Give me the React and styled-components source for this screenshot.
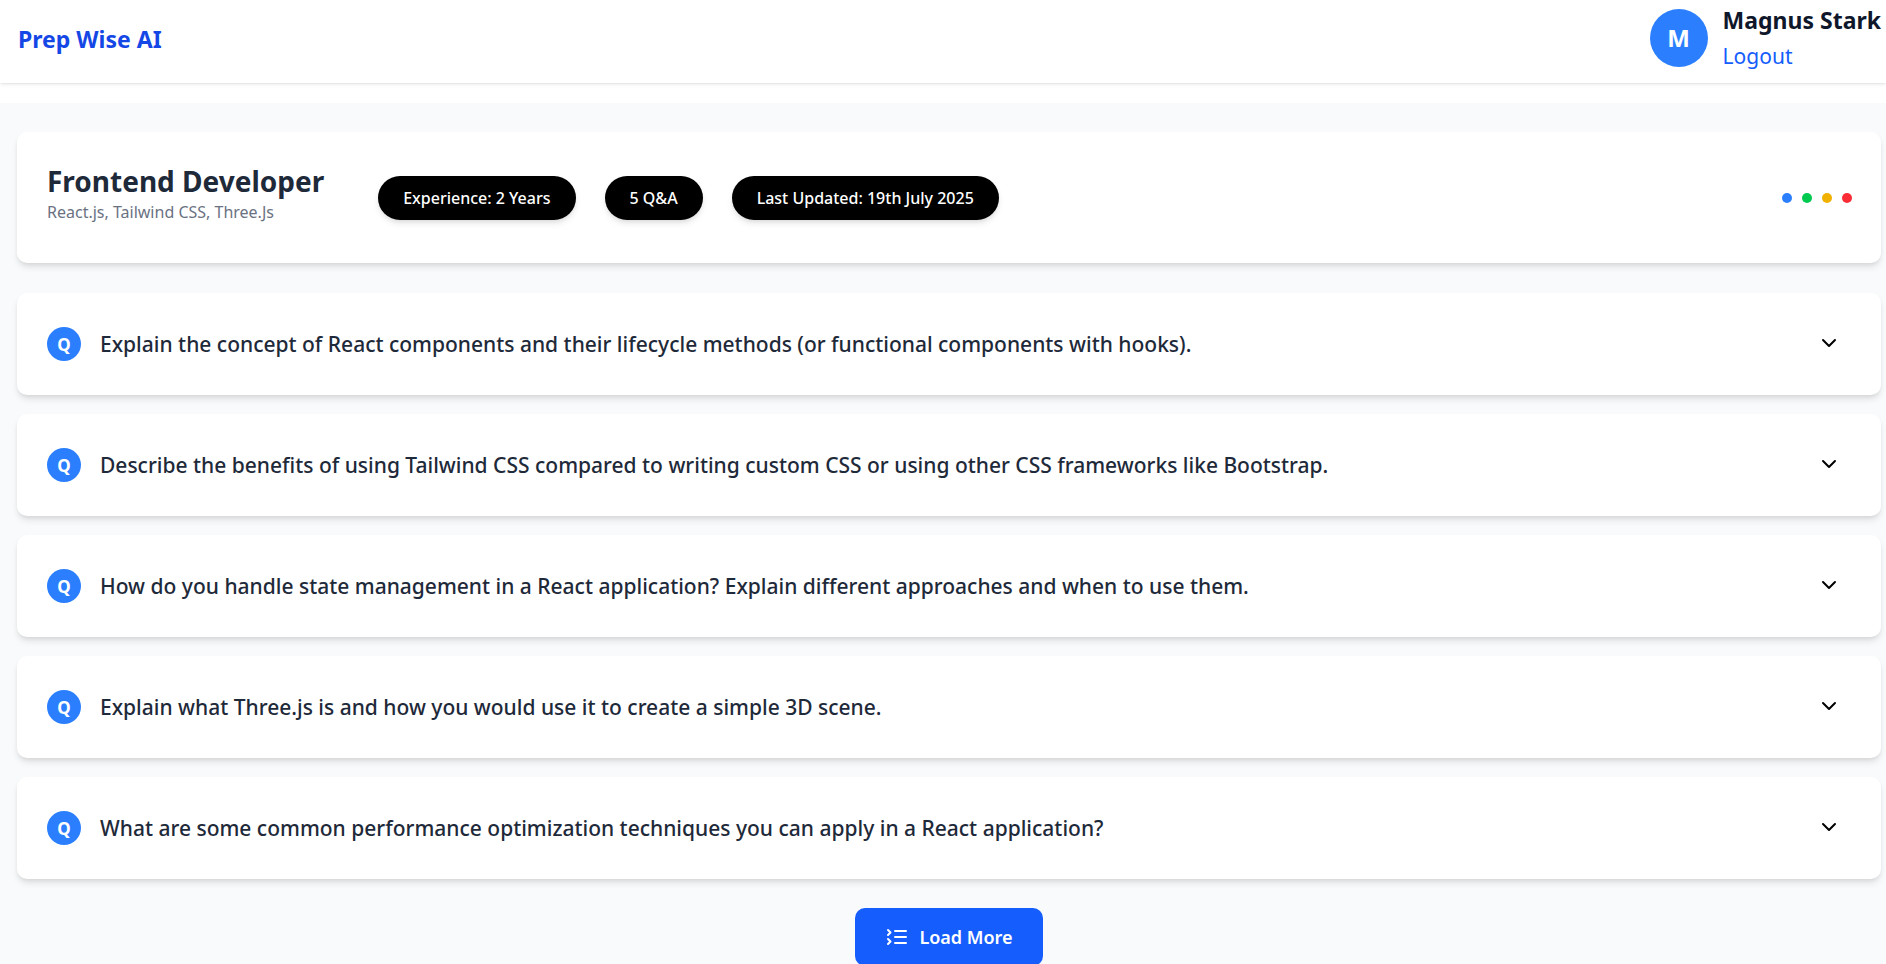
import React from "react";
import styled, { createGlobalStyle } from "styled-components";

const GlobalStyle = createGlobalStyle`
  *, *::before, *::after { box-sizing: border-box; }
  body {
    margin: 0;
    background: #ffffff;
    font-family: "Noto Sans", "Open Sans", sans-serif;
    overflow-x: hidden;
  }
  ::-webkit-scrollbar { display: none; }
  button { font-family: inherit; cursor: pointer; border: 0; }
`;

const cardShadow = "0 5px 7px -1px rgba(0,0,0,0.1), 0 2px 5px -2px rgba(0,0,0,0.1)";

const Header = styled.header`
  display: flex;
  align-items: center;
  justify-content: space-between;
  height: 83px;
  padding: 0 5px 7px 18px;
  background: #ffffff;
  box-shadow: 0 1px 4px rgba(0, 0, 0, 0.1), 0 1px 2px -1px rgba(0, 0, 0, 0.1);
`;

const Brand = styled.a`
  padding-top: 2px;
  color: #1447e6;
  font-size: 23px;
  font-weight: 700;
  line-height: 32px;
  text-decoration: none;
`;

const User = styled.div`
  display: flex;
  align-items: center;
  gap: 15px;
`;

const Avatar = styled.span`
  display: flex;
  align-items: center;
  justify-content: center;
  flex: none;
  width: ${(p) => p.$size}px;
  height: ${(p) => p.$size}px;
  border-radius: 50%;
  background: #2b7fff;
  color: #ffffff;
  font-size: ${(p) => p.$font}px;
  font-weight: 700;
  line-height: 1;
`;

const UserText = styled.div`
  display: flex;
  flex-direction: column;
  align-items: flex-start;
`;

const UserName = styled.span`
  color: #0f172b;
  font-size: 23px;
  font-weight: 700;
  line-height: 36px;
`;

const Logout = styled.button`
  padding: 0;
  background: none;
  color: #155dfc;
  font-size: 21px;
  line-height: 36px;
`;

const Main = styled.main`
  display: flex;
  flex-direction: column;
  margin-top: 20px;
  padding: 29px 5px 29px 17px;
  background: #f9fafb;
`;

const Summary = styled.section`
  display: flex;
  align-items: center;
  justify-content: space-between;
  height: 131px;
  padding: 0 29px 0 30px;
  border-radius: 10px;
  background: #ffffff;
  box-shadow: ${cardShadow};
`;

const SummaryInfo = styled.div`
  display: flex;
  align-items: center;
  gap: 54px;
`;

const Role = styled.div`
  padding-bottom: 8px;
`;

const Title = styled.h1`
  margin: 0;
  color: #1e2939;
  font-size: 28px;
  font-weight: 700;
  line-height: 36px;
`;

const Skills = styled.p`
  margin: 0;
  color: #6a7282;
  font-size: 16px;
  line-height: 26px;
`;

const Pills = styled.div`
  display: flex;
  gap: 29px;
`;

const Pill = styled.span`
  padding: 8px 25px;
  border-radius: 22px;
  background: #000000;
  color: #ffffff;
  font-size: 16px;
  font-weight: 500;
  line-height: 28px;
  box-shadow: 0 4px 7px -1px rgba(0, 0, 0, 0.1), 0 2px 5px -2px rgba(0, 0, 0, 0.1);
`;

const Dots = styled.div`
  display: flex;
  gap: 10px;
`;

const Dot = styled.span`
  width: 10px;
  height: 10px;
  border-radius: 50%;
  background: ${(p) => p.$color};
`;

const Questions = styled.div`
  display: flex;
  flex-direction: column;
  gap: 19px;
  margin-top: 30px;
`;

const QuestionCard = styled.article`
  display: flex;
  align-items: center;
  height: 102px;
  padding: 0 40px 0 30px;
  border-radius: 10px;
  background: #ffffff;
  box-shadow: ${cardShadow};
`;

const QuestionText = styled.h2`
  flex: 1;
  margin: 0 0 0 19px;
  color: #1e2939;
  font-size: 21px;
  font-weight: 500;
  line-height: 32px;
`;

const IconButton = styled.button`
  display: flex;
  padding: 0 0 2px;
  background: none;
  color: #000000;
`;

const LoadMore = styled.button`
  display: flex;
  align-items: center;
  justify-content: center;
  align-self: center;
  gap: 10px;
  width: 188px;
  height: 58px;
  margin-top: 29px;
  border-radius: 10px;
  background: #155dfc;
  color: #ffffff;
  font-size: 18px;
  font-weight: 600;
`;

const Stroke = ({ size, children }) => (
  <svg
    width={size}
    height={size}
    viewBox="0 0 24 24"
    fill="none"
    stroke="currentColor"
    strokeWidth="2"
    strokeLinecap="round"
    strokeLinejoin="round"
    aria-hidden="true"
  >
    {children}
  </svg>
);

const questions = [
  "Explain the concept of React components and their lifecycle methods (or functional components with hooks).",
  "Describe the benefits of using Tailwind CSS compared to writing custom CSS or using other CSS frameworks like Bootstrap.",
  "How do you handle state management in a React application? Explain different approaches and when to use them.",
  "Explain what Three.js is and how you would use it to create a simple 3D scene.",
  "What are some common performance optimization techniques you can apply in a React application?",
];

export default function App() {
  return (
    <>
      <GlobalStyle />
      <Header>
        <Brand href="#">Prep Wise AI</Brand>
        <User>
          <Avatar $size={58} $font={24}>M</Avatar>
          <UserText>
            <UserName>Magnus Stark</UserName>
            <Logout type="button">Logout</Logout>
          </UserText>
        </User>
      </Header>
      <Main>
        <Summary>
          <SummaryInfo>
            <Role>
              <Title>Frontend Developer</Title>
              <Skills>React.js, Tailwind CSS, Three.Js</Skills>
            </Role>
            <Pills>
              <Pill>Experience: 2 Years</Pill>
              <Pill>5 Q&amp;A</Pill>
              <Pill>Last Updated: 19th July 2025</Pill>
            </Pills>
          </SummaryInfo>
          <Dots>
            {["#2b7fff", "#00c950", "#f0b100", "#fb2c36"].map((c) => (
              <Dot key={c} $color={c} />
            ))}
          </Dots>
        </Summary>
        <Questions>
          {questions.map((q) => (
            <QuestionCard key={q}>
              <Avatar $size={34} $font={17}>Q</Avatar>
              <QuestionText>{q}</QuestionText>
              <IconButton type="button" aria-label="Show answer">
                <Stroke size={24}>
                  <path d="m6 9 6 6 6-6" />
                </Stroke>
              </IconButton>
            </QuestionCard>
          ))}
        </Questions>
        <LoadMore type="button">
          <Stroke size={24}>
            <path d="m3 10 2.5-2.5L3 5" />
            <path d="m3 19 2.5-2.5L3 14" />
            <path d="M10 6h11" />
            <path d="M10 12h11" />
            <path d="M10 18h11" />
          </Stroke>
          Load More
        </LoadMore>
      </Main>
    </>
  );
}
